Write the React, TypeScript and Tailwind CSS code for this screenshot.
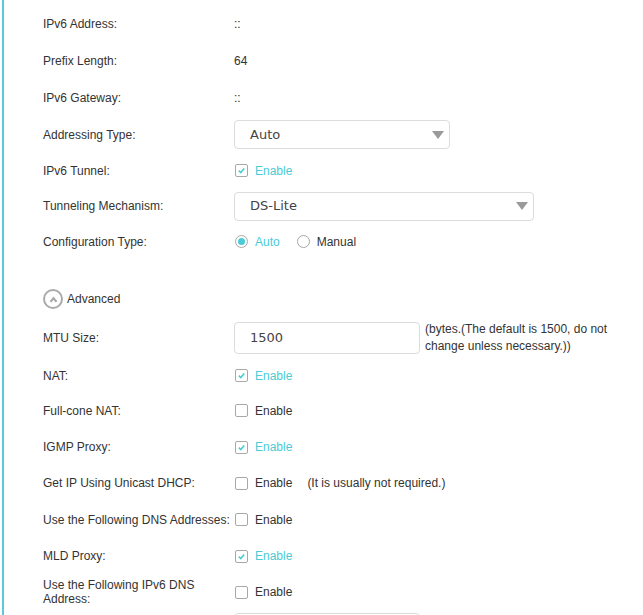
import type { ReactNode } from "react";

const LABEL_FONT = "font-['Liberation_Sans',Arial,sans-serif]";
const FIELD_FONT = "font-['DejaVu_Sans',Verdana,sans-serif]";

function Row({ label, h, children }: { label: string; h: string; children?: ReactNode }) {
  return (
    <div className={`flex items-center ${h}`}>
      <div className="w-[191px] shrink-0 pr-1 leading-[14px] text-[12px] text-[#333]">{label}</div>
      <div className="flex items-center">{children}</div>
    </div>
  );
}

function Checkbox({ checked, label = "Enable" }: { checked?: boolean; label?: string }) {
  return (
    <div className="flex items-center">
      <span className="ml-[1px] flex h-[13px] w-[13px] items-center justify-center rounded-[2px] border border-[#a8a8a8] bg-white">
        {checked && (
          <svg viewBox="0 0 10 10" className="h-[9px] w-[9px]">
            <path d="M2 5.2 L4.2 7.3 L8 2.8" fill="none" stroke="#4acbd6" strokeWidth="1.8" />
          </svg>
        )}
      </span>
      <span className={`ml-[7px] text-[12px] ${checked ? "text-[#4acbd6]" : "text-[#333]"}`}>{label}</span>
    </div>
  );
}

function Radio({ checked, label }: { checked?: boolean; label: string }) {
  return (
    <div className="flex items-center">
      <span className="ml-[1px] flex h-[13px] w-[13px] items-center justify-center rounded-full border border-[#a8a8a8] bg-white">
        {checked && <span className="h-[7px] w-[7px] rounded-full bg-[#4acbd6]" />}
      </span>
      <span className={`ml-[7px] text-[12px] ${checked ? "text-[#4acbd6]" : "text-[#333]"}`}>{label}</span>
    </div>
  );
}

function Select({ value, w }: { value: string; w: string }) {
  return (
    <div
      className={`flex h-[29px] ${w} items-center justify-between rounded-[4px] border border-[#dcdcdc] bg-white pl-[15px] pr-[5px]`}
    >
      <span className={`${FIELD_FONT} text-[13px] text-[#444]`}>{value}</span>
      <svg viewBox="0 0 12 8" className="h-[8px] w-[12px]">
        <path d="M0 0 H12 L6 8 Z" fill="#9a9a9a" />
      </svg>
    </div>
  );
}

export default function App() {
  return (
    <div className={`h-[615px] w-[643px] overflow-hidden bg-white ${LABEL_FONT}`}>
      <div className="ml-[2px] h-full border-l-[2px] border-[#5ccbd8] pl-[39px] pt-[5px]">
        <Row label="IPv6 Address:" h="h-[37px]">
          <span className="text-[12px] text-[#333]">::</span>
        </Row>
        <Row label="Prefix Length:" h="h-[37px]">
          <span className="text-[12px] text-[#333]">64</span>
        </Row>
        <Row label="IPv6 Gateway:" h="h-[37px]">
          <span className="text-[12px] text-[#333]">::</span>
        </Row>
        <Row label="Addressing Type:" h="h-[37px]">
          <Select value="Auto" w="w-[216px]" />
        </Row>
        <Row label="IPv6 Tunnel:" h="h-[35px]">
          <Checkbox checked />
        </Row>
        <Row label="Tunneling Mechanism:" h="h-[36px]">
          <Select value="DS-Lite" w="w-[300px]" />
        </Row>
        <Row label="Configuration Type:" h="h-[35px]">
          <div className="flex items-center gap-[16px]">
            <Radio checked label="Auto" />
            <Radio label="Manual" />
          </div>
        </Row>

        <div className="mt-[22px] flex h-[36px] items-center">
          <span className="flex h-[20px] w-[20px] items-center justify-center rounded-full border-[2px] border-[#aaa]">
            <svg viewBox="0 0 10 8" className="h-[7px] w-[9px]">
              <path d="M5 0.5 L9.5 6 L7.5 7.5 L5 4.5 L2.5 7.5 L0.5 6 Z" fill="#aaa" />
            </svg>
          </span>
          <span className="ml-[4px] text-[12px] text-[#333]">Advanced</span>
        </div>

        <Row label="MTU Size:" h="h-[42px]">
          <div className="flex h-[32px] w-[186px] items-center rounded-[4px] border border-[#dcdcdc] bg-white pl-[15px]">
            <span className={`${FIELD_FONT} text-[13px] text-[#444]`}>1500</span>
          </div>
          <span className="ml-[5px] w-[190px] text-[12px] leading-[17px] text-[#333]">
            (bytes.(The default is 1500, do not change unless necessary.))
          </span>
        </Row>
        <Row label="NAT:" h="h-[33px]">
          <Checkbox checked />
        </Row>
        <Row label="Full-cone NAT:" h="h-[37px]">
          <Checkbox />
        </Row>
        <Row label="IGMP Proxy:" h="h-[36px]">
          <Checkbox checked />
        </Row>
        <Row label="Get IP Using Unicast DHCP:" h="h-[36px]">
          <Checkbox />
          <span className="ml-[15px] text-[12px] text-[#333]">(It is usually not required.)</span>
        </Row>
        <Row label="Use the Following DNS Addresses:" h="h-[37px]">
          <Checkbox />
        </Row>
        <Row label="MLD Proxy:" h="h-[36px]">
          <Checkbox checked />
        </Row>
        <Row label="Use the Following IPv6 DNS Address:" h="h-[36px]">
          <Checkbox />
        </Row>
        <div className="ml-[191px] mt-[3px] h-[32px] w-[186px] rounded-[4px] border border-[#dcdcdc] bg-white" />
      </div>
    </div>
  );
}
